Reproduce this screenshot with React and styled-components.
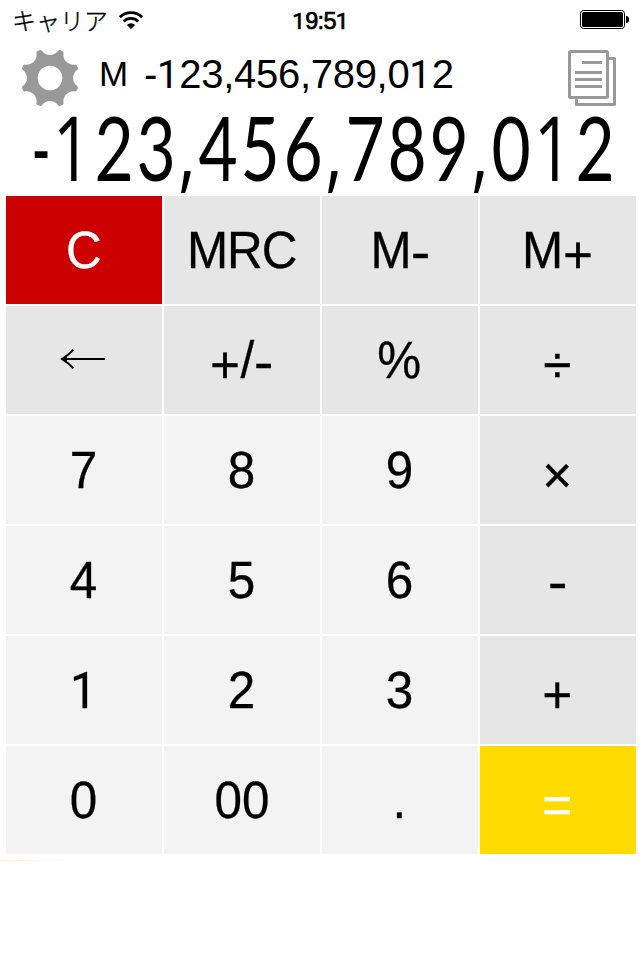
import React, { useState } from 'react';
import styled, { createGlobalStyle } from 'styled-components';

const KEYS = [
  { label: 'C', kind: 'clear' },
  { label: 'MRC', kind: 'function', spacing: -1 },
  { label: 'M-', kind: 'function', spacing: 1 },
  { label: 'M+', kind: 'function', spacing: 1 },
  { label: '←', kind: 'function' },
  { label: '+/-', kind: 'function', spacing: 1 },
  { label: '%', kind: 'function' },
  { label: '÷', kind: 'function' },
  { label: '7', kind: 'digit' },
  { label: '8', kind: 'digit' },
  { label: '9', kind: 'digit' },
  { label: '×', kind: 'function' },
  { label: '4', kind: 'digit' },
  { label: '5', kind: 'digit' },
  { label: '6', kind: 'digit' },
  { label: '-', kind: 'function' },
  { label: '1', kind: 'digit' },
  { label: '2', kind: 'digit' },
  { label: '3', kind: 'digit' },
  { label: '+', kind: 'function' },
  { label: '0', kind: 'digit' },
  { label: '00', kind: 'digit' },
  { label: '.', kind: 'digit' },
  { label: '=', kind: 'equals' },
];

const KEY_COLORS = {
  clear: '#cc0000',
  function: '#e6e6e6',
  digit: '#f3f3f3',
  equals: '#ffdb00',
};

// one tooth every 45 degrees, with a round notch in between
const gearPath = () => {
  const at = (r, deg) => {
    const a = (deg * Math.PI) / 180;
    return `${(28 + r * Math.cos(a)).toFixed(2)} ${(28 + r * Math.sin(a)).toFixed(2)}`;
  };
  let d = '';
  for (let i = 0; i < 8; i++) {
    const c = i * 45 + 22.5;
    d += `${i === 0 ? 'M' : 'L'}${at(29, c - 5.5)} L${at(29.6, c - 3)} L${at(29.6, c + 3)} L${at(29, c + 5.5)} `;
    d += `A10 10 0 0 0 ${at(29, c + 39.5)} `;
  }
  return `${d}Z M40.3 28 A12.3 12.3 0 1 0 15.7 28 A12.3 12.3 0 1 0 40.3 28 Z`;
};

function WifiIcon() {
  return (
    <svg width="24" height="18" viewBox="0 0 24 18" fill="none" stroke="#000" strokeWidth="2.8">
      <path d="M0.9 6.2 A15.8 15.8 0 0 1 23.1 6.2" />
      <path d="M4.7 10.4 A10.4 10.4 0 0 1 19.3 10.4" />
      <path d="M12 18 L7.9 14 A5.8 5.8 0 0 1 16.1 14 Z" fill="#000" stroke="none" />
    </svg>
  );
}

function BatteryIcon() {
  return (
    <svg width="49" height="20" viewBox="0 0 49 20">
      <rect x="0.5" y="0.5" width="44" height="18" rx="3" fill="none" stroke="#000" />
      <rect x="2" y="2" width="41" height="15" rx="1.5" />
      <path d="M46 6 A3.2 3.5 0 0 1 46 13 Z" />
    </svg>
  );
}

function HistoryIcon() {
  return (
    <svg width="48" height="56" viewBox="0 0 48 56" fill="none" stroke="#999" strokeWidth="3">
      <rect x="1.5" y="1.5" width="38" height="46" rx="1" />
      <path d="M40 8.5 H46.5 V54.5 H8.5 V48" strokeLinejoin="round" />
      <path d="M14 12.5 H34 M7 22.5 H34 M7 29.5 H34 M7 36.5 H34" />
    </svg>
  );
}

function BackArrow() {
  return (
    <ArrowSvg width="46" height="22" viewBox="0 0 46 22" fill="none" stroke="#000" strokeWidth="2">
      <path d="M2 11 H45 M13.3 1.7 L8.3 6.6 L2 11 L8.3 15.4 L13.3 20.3" />
      <path d="M2 11 L7 8 V14 Z" fill="#000" stroke="none" />
    </ArrowSvg>
  );
}

// the figure 1 is set without a foot
function Figures({ children }) {
  return children.split('').map((char, i) => (char === '1' ? <One key={i}>1</One> : char));
}

function App() {
  const [value] = useState('-123,456,789,012');
  const [memory] = useState('-123,456,789,012');

  return (
    <>
      <GlobalStyle />
      <Screen>
        <StatusBar>
          <Carrier>
            キャリア
            <WifiIcon />
          </Carrier>
          <Clock>
            <Figures>19:51</Figures>
          </Clock>
          <Battery>
            <BatteryIcon />
          </Battery>
        </StatusBar>

        <MemoryBar>
          <IconButton aria-label="settings">
            <GearSvg width="56" height="56" viewBox="0 0 56 56" fill="#999" fillRule="evenodd">
              <path d={gearPath()} />
            </GearSvg>
          </IconButton>
          <MemoryLabel>M</MemoryLabel>
          <MemoryValue>
            <Figures>{memory}</Figures>
          </MemoryValue>
          <IconButton aria-label="history">
            <HistoryIcon />
          </IconButton>
        </MemoryBar>

        <Display>
          {value.split('').map((char, i) => (
            <DisplayChar key={i} $char={char}>{char}</DisplayChar>
          ))}
        </Display>

        <Keypad>
          {KEYS.map(({ label, kind, spacing }) => (
            <Key key={label} $kind={kind} aria-label={label}>
              {label === '←' ? (
                <BackArrow />
              ) : (
                <KeyLabel $spacing={spacing}>
                  {label.split('').map((char, i) => (
                    <Glyph key={i} $char={char}>
                      <Figures>{char}</Figures>
                    </Glyph>
                  ))}
                </KeyLabel>
              )}
            </Key>
          ))}
        </Keypad>
        <AdArea />
      </Screen>
    </>
  );
}

const GlobalStyle = createGlobalStyle`
  * {
    box-sizing: border-box;
  }

  body {
    margin: 0;
    background-color: #fff;
    font-family: 'Liberation Sans', Arial, sans-serif;
  }
`;

const Screen = styled.div`
  width: 640px;
  height: 960px;
  display: flex;
  flex-direction: column;
  overflow: hidden;
  background-color: #fff;
  color: #000;
`;

const One = styled.span`
  display: inline-block;
  width: 0.576em;
  font-family: Roboto, sans-serif;
  font-size: 0.967em;
  line-height: 1;
  letter-spacing: 0;
`;

const StatusBar = styled.div`
  height: 40px;
  display: grid;
  grid-template-columns: 1fr auto 1fr;
  align-items: center;
  padding: 0 11px 0 12px;
`;

const Carrier = styled.div`
  display: flex;
  align-items: center;
  gap: 11px;
  font-family: 'Noto Sans CJK JP', sans-serif;
  font-size: 24px;
  font-weight: 300;
  line-height: 38px;
  -webkit-text-stroke: 0.35px #000;
`;

const Clock = styled.div`
  padding: 2px 0 0 0;
  font-size: 23.5px;
  letter-spacing: -0.7px;
  -webkit-text-stroke: 0.7px #000;
`;

const Battery = styled.div`
  display: flex;
  justify-content: flex-end;
`;

const MemoryBar = styled.div`
  height: 73px;
  display: flex;
  align-items: flex-start;
  padding: 10px 24px 0 22px;
`;

const IconButton = styled.button`
  display: flex;
  padding: 0;
  border: none;
  background: none;
`;

const GearSvg = styled.svg`
  overflow: visible;
`;

const MemoryLabel = styled.div`
  width: 45px;
  margin-left: 21px;
  font-size: 35px;
  line-height: 48px;
`;

const MemoryValue = styled.div`
  flex: 1;
  font-size: 40px;
  letter-spacing: -0.3px;
  line-height: 48px;
`;

const Display = styled.div`
  height: 83px;
  display: flex;
  justify-content: flex-end;
  align-items: baseline;
  padding-right: 24px;
  font-family: Lato, sans-serif;
  font-size: 89px;
  line-height: 68px;
`;

const charWidth = char => (char === ',' ? '19.9px' : char === '-' ? '20px' : '42.1px');

const DisplayChar = styled.span`
  display: flex;
  justify-content: center;
  width: ${props => charWidth(props.$char)};
  transform: scaleX(${props => (props.$char === '-' ? 0.58 : 0.76)});
  font-family: ${props => (props.$char === ',' || props.$char === '1' ? "'Open Sans', sans-serif" : 'inherit')};
`;

const Keypad = styled.div`
  display: grid;
  grid-template-columns: repeat(4, 156px);
  grid-auto-rows: 108px;
  gap: 2px;
  padding-left: 6px;
`;

const Key = styled.button`
  display: flex;
  align-items: center;
  justify-content: center;
  padding: 0;
  border: none;
  background-color: ${props => KEY_COLORS[props.$kind]};
  color: ${props => (props.$kind === 'clear' || props.$kind === 'equals' ? '#fff' : '#000')};
  font-family: inherit;
  font-size: 52px;
  line-height: 60px;
`;

const ArrowSvg = styled.svg`
  margin: 0 2px 2px 0;
`;

const KeyLabel = styled.span`
  display: flex;
  align-items: baseline;
  gap: ${props => Math.max(props.$spacing || 0, 0)}px;
  letter-spacing: ${props => Math.min(props.$spacing || 0, 0)}px;
  padding-right: 1px;
  transform: scaleX(0.95);
  -webkit-text-stroke: 0.3px currentColor;
`;

const glyphTransform = char => {
  if (char === '-') return 'translateY(2px) scaleX(1.2)';
  if ('+÷×='.includes(char)) return 'translateY(4.5px) scale(1.04, 1)';
  return 'none';
};

const Glyph = styled.span`
  transform: ${props => glyphTransform(props.$char)};
`;

const AdArea = styled.div`
  flex: 1;
  margin-top: 6px;
  background: linear-gradient(to right, #fff0c8, #fff 80px) no-repeat;
  background-size: 100% 1px;
`;

export default App;
